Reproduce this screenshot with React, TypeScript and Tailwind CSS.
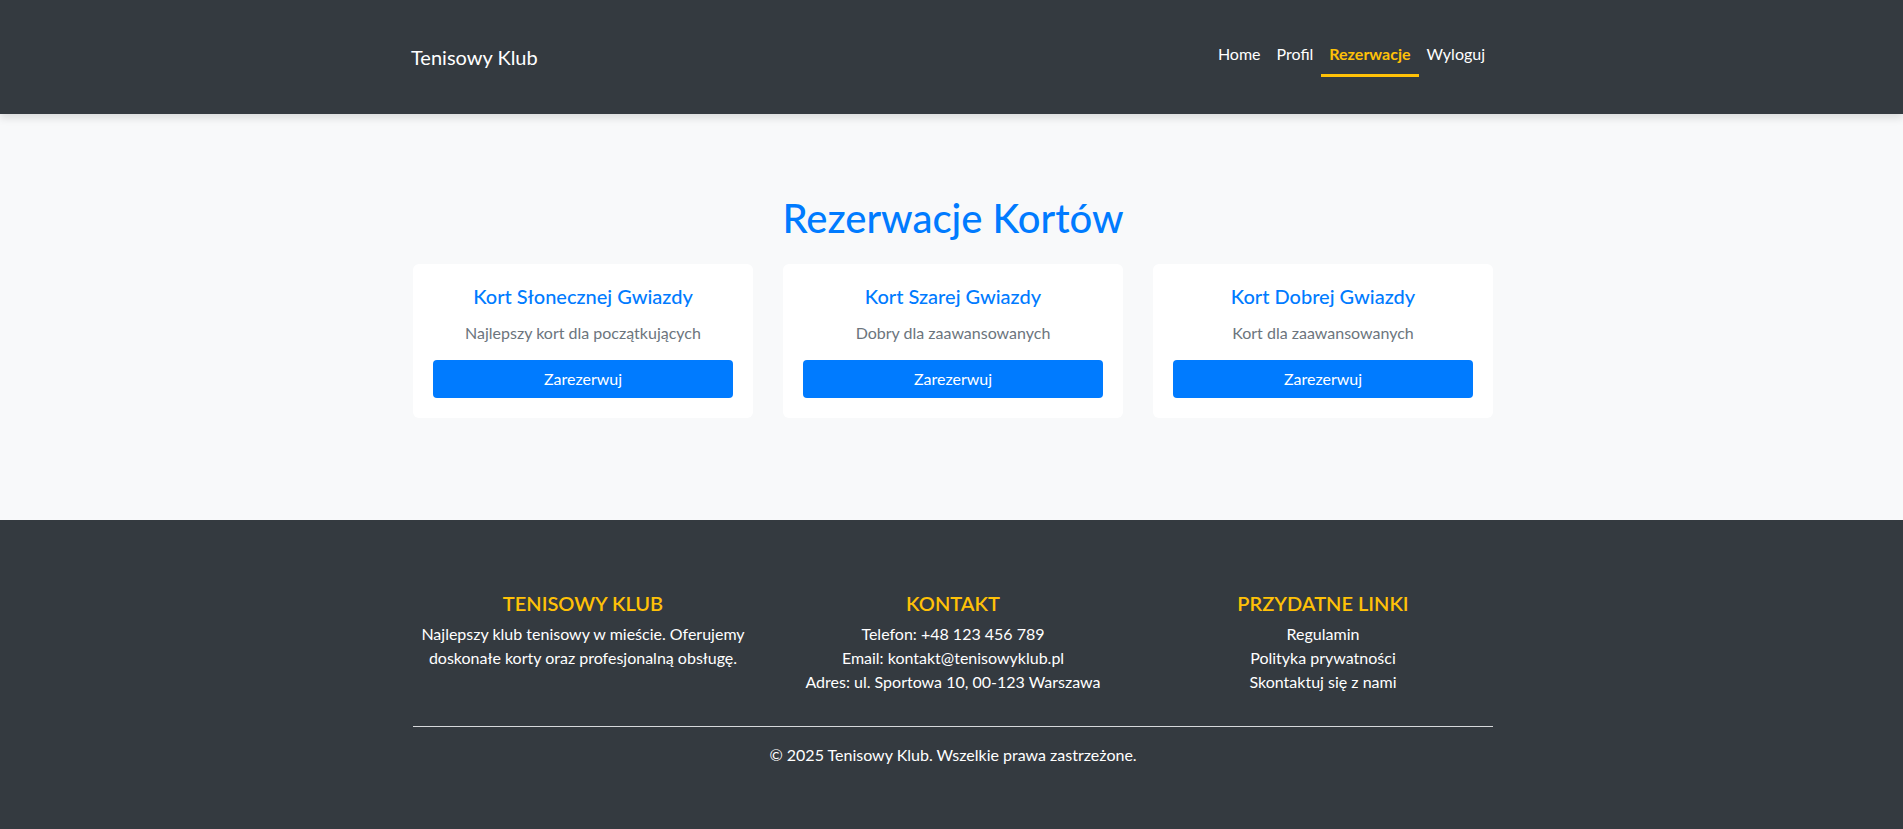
const courts = [
  { name: "Kort Słonecznej Gwiazdy", desc: "Najlepszy kort dla początkujących" },
  { name: "Kort Szarej Gwiazdy", desc: "Dobry dla zaawansowanych" },
  { name: "Kort Dobrej Gwiazdy", desc: "Kort dla zaawansowanych" },
]

const navLinks = [
  { label: "Home", active: false },
  { label: "Profil", active: false },
  { label: "Rezerwacje", active: true },
  { label: "Wyloguj", active: false },
]

function Header() {
  return (
    <header className="relative z-10 bg-[#343a40] shadow-[0_4px_8px_rgba(0,0,0,0.12)]">
      <div className="mx-auto flex h-[114px] max-w-[1083px] items-center justify-between pl-[1px]">
        <a className="text-[20px] leading-[30px] text-white">Tenisowy Klub</a>
        <nav className="mb-[4px] flex">
          {navLinks.map((link) => (
            <a
              key={link.label}
              className={
                link.active
                  ? "border-b-[3px] border-[#ffc107] px-2 pt-2 pb-2 text-[16px] leading-6 font-bold text-[#ffc107]"
                  : "border-b-[3px] border-transparent px-2 pt-2 pb-2 text-[16px] leading-6 text-white"
              }
            >
              {link.label}
            </a>
          ))}
        </nav>
      </div>
    </header>
  )
}

function CourtCard({ name, desc }: { name: string; desc: string }) {
  return (
    <div className="rounded-md bg-white px-5 pt-[20px] pb-5 text-center">
      <h5 className="mb-[13px] text-[20px] leading-6 font-medium text-[#007bff]">{name}</h5>
      <p className="mb-[15px] text-[16px] leading-6 text-[#6c757d]">{desc}</p>
      <button className="h-[38px] w-full rounded bg-[#007bff] text-[16px] text-white">Zarezerwuj</button>
    </div>
  )
}

function Footer() {
  return (
    <footer className="bg-[#343a40] pt-[71px] pb-[62px] text-white">
      <div className="mx-auto max-w-[1083px] pl-[3px]">
        <div className="grid grid-cols-3 gap-[30px] text-center text-[16px] leading-6">
          <div>
            <h5 className="mb-[7px] text-[20px] leading-6 font-semibold text-[#ffc107]">TENISOWY KLUB</h5>
            <p>
              Najlepszy klub tenisowy w mieście. Oferujemy
              <br />
              doskonałe korty oraz profesjonalną obsługę.
            </p>
          </div>
          <div>
            <h5 className="mb-[7px] text-[20px] leading-6 font-semibold text-[#ffc107]">KONTAKT</h5>
            <p>Telefon: +48 123 456 789</p>
            <p>Email: kontakt@tenisowyklub.pl</p>
            <p>Adres: ul. Sportowa 10, 00-123 Warszawa</p>
          </div>
          <div>
            <h5 className="mb-[7px] text-[20px] leading-6 font-semibold text-[#ffc107]">PRZYDATNE LINKI</h5>
            <ul>
              <li>Regulamin</li>
              <li>Polityka prywatności</li>
              <li>Skontaktuj się z nami</li>
            </ul>
          </div>
        </div>
        <hr className="mt-8 mb-4 border-t border-[#d6d8db]" />
        <p className="text-center text-[16px] leading-6">© 2025 Tenisowy Klub. Wszelkie prawa zastrzeżone.</p>
      </div>
    </footer>
  )
}

export default function App() {
  return (
    <div className="min-h-screen bg-[#f8f9fa] font-['Lato','Open_Sans',sans-serif]">
      <Header />
      <main className="bg-[#f8f9fa] pt-20 pb-[102px]">
        <div className="mx-auto max-w-[1083px] pl-[3px]">
          <h1 className="mb-[22px] text-center text-[40px] leading-[48px] font-medium text-[#007bff]">
            Rezerwacje Kortów
          </h1>
          <div className="grid grid-cols-3 gap-[30px]">
            {courts.map((court) => (
              <CourtCard key={court.name} name={court.name} desc={court.desc} />
            ))}
          </div>
        </div>
      </main>
      <Footer />
    </div>
  )
}
